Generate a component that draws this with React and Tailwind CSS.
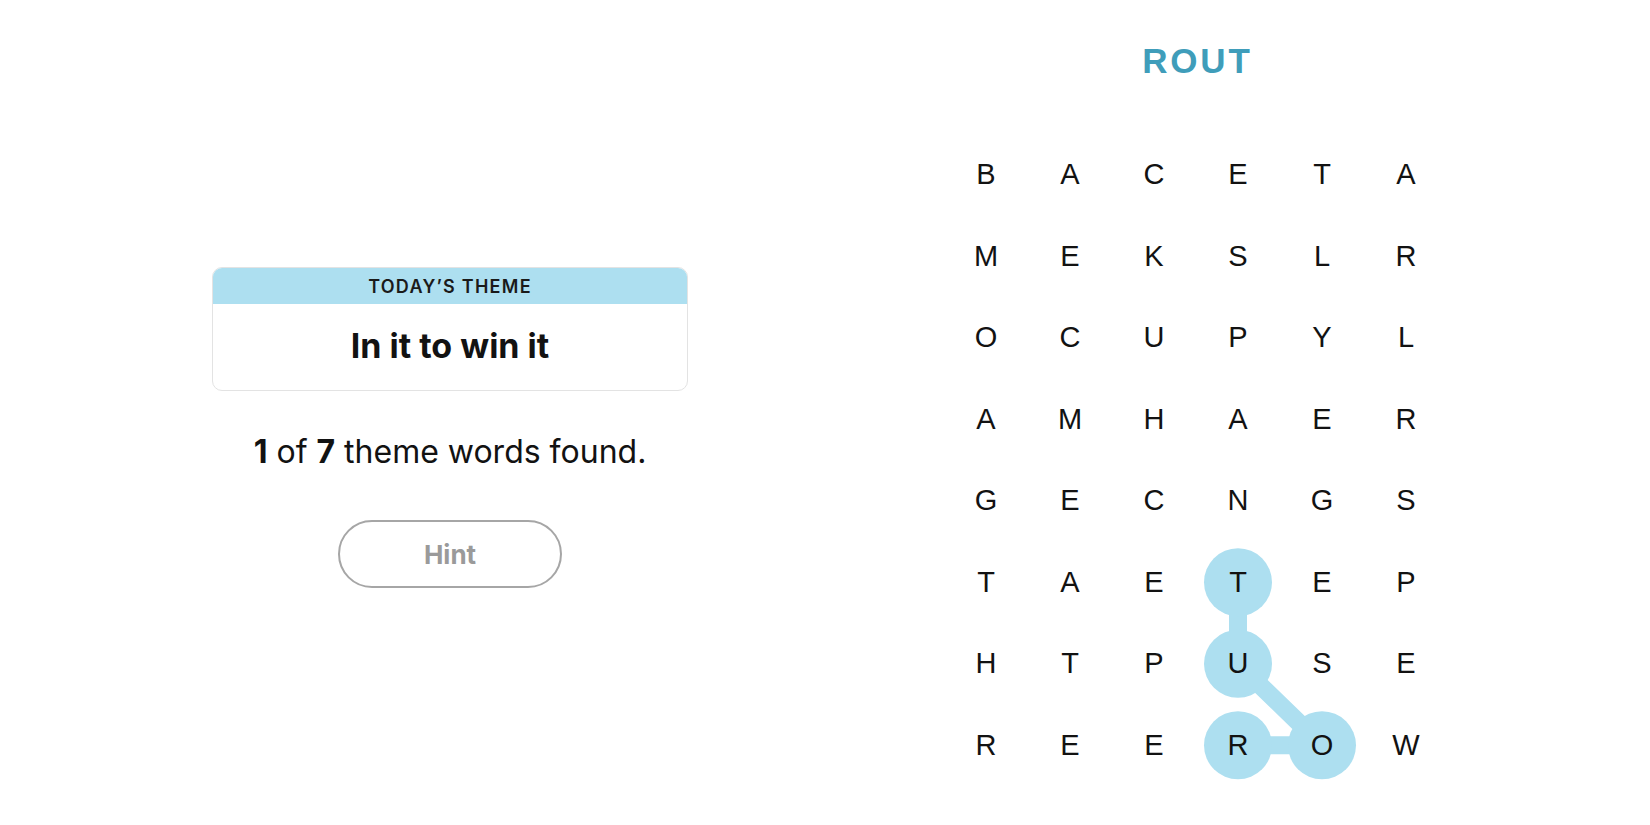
import React from 'react';

const GRID = [
  'BACETA',
  'MEKSLR',
  'OCUPYL',
  'AMHAER',
  'GECNGS',
  'TAETEP',
  'HTPUSE',
  'REEROW',
];

const CELL_W = 84;
const CELL_H = 81.5;

// path of the word being built: R -> O -> U -> T
const PATH = [
  [7, 3],
  [7, 4],
  [6, 3],
  [5, 3],
];

function Board() {
  const points = PATH.map(([r, c]) => [c * CELL_W + CELL_W / 2, r * CELL_H + CELL_H / 2]);

  return (
    <div className="relative grid w-[504px] grid-cols-6">
      <svg
        className="pointer-events-none absolute left-0 top-0"
        width={CELL_W * 6}
        height={CELL_H * 8}
      >
        <polyline
          points={points.map((p) => p.join(',')).join(' ')}
          fill="none"
          stroke="#addff0"
          strokeWidth="18"
          strokeLinejoin="round"
        />
        {points.map(([x, y]) => (
          <circle key={`${x}-${y}`} cx={x} cy={y} r="34" fill="#addff0" />
        ))}
      </svg>
      {GRID.map((row, r) =>
        row.split('').map((letter, c) => (
          <div
            key={`${r}-${c}`}
            className="relative flex h-[81.5px] w-[84px] items-center justify-center text-[29px] leading-none text-[#121212]"
          >
            {letter}
          </div>
        ))
      )}
    </div>
  );
}

function ThemePanel() {
  return (
    <div className="flex w-[476px] flex-col items-center font-['Inter',sans-serif]">
      <div className="w-full overflow-hidden rounded-[10px] border border-[#e3e3e3]">
        <div className="flex h-[36px] items-center justify-center bg-[#addff0] text-[18px] font-semibold tracking-[0.07em] text-[#1a1a1a]">
          TODAY’S THEME
        </div>
        <div className="flex h-[86px] items-center justify-center pb-[3px] text-[34px] font-bold text-[#121212]">
          In it to win it
        </div>
      </div>
      <p className="mt-[45px] text-[32px] leading-none text-[#121212]">
        <span className="font-bold">1</span> of <span className="font-bold">7</span> theme words found.
      </p>
      <button className="mt-[52px] h-[68px] w-[224px] rounded-full border-2 border-[#a6a6a6] bg-white text-[26px] font-bold text-[#9a9a9a]">
        Hint
      </button>
    </div>
  );
}

export default function App() {
  return (
    <div className="flex h-[825px] w-[1650px] bg-white font-['Liberation_Sans',Arial,sans-serif]">
      <div className="ml-[212px] pt-[267px]">
        <ThemePanel />
      </div>
      <div className="ml-[256px] flex flex-col items-center pt-[43px]">
        <h1 className="h-[91px] pl-[0.08em] text-[35px] font-bold leading-none tracking-[0.08em] text-[#3f9dba]">ROUT</h1>
        <Board />
      </div>
    </div>
  );
}
